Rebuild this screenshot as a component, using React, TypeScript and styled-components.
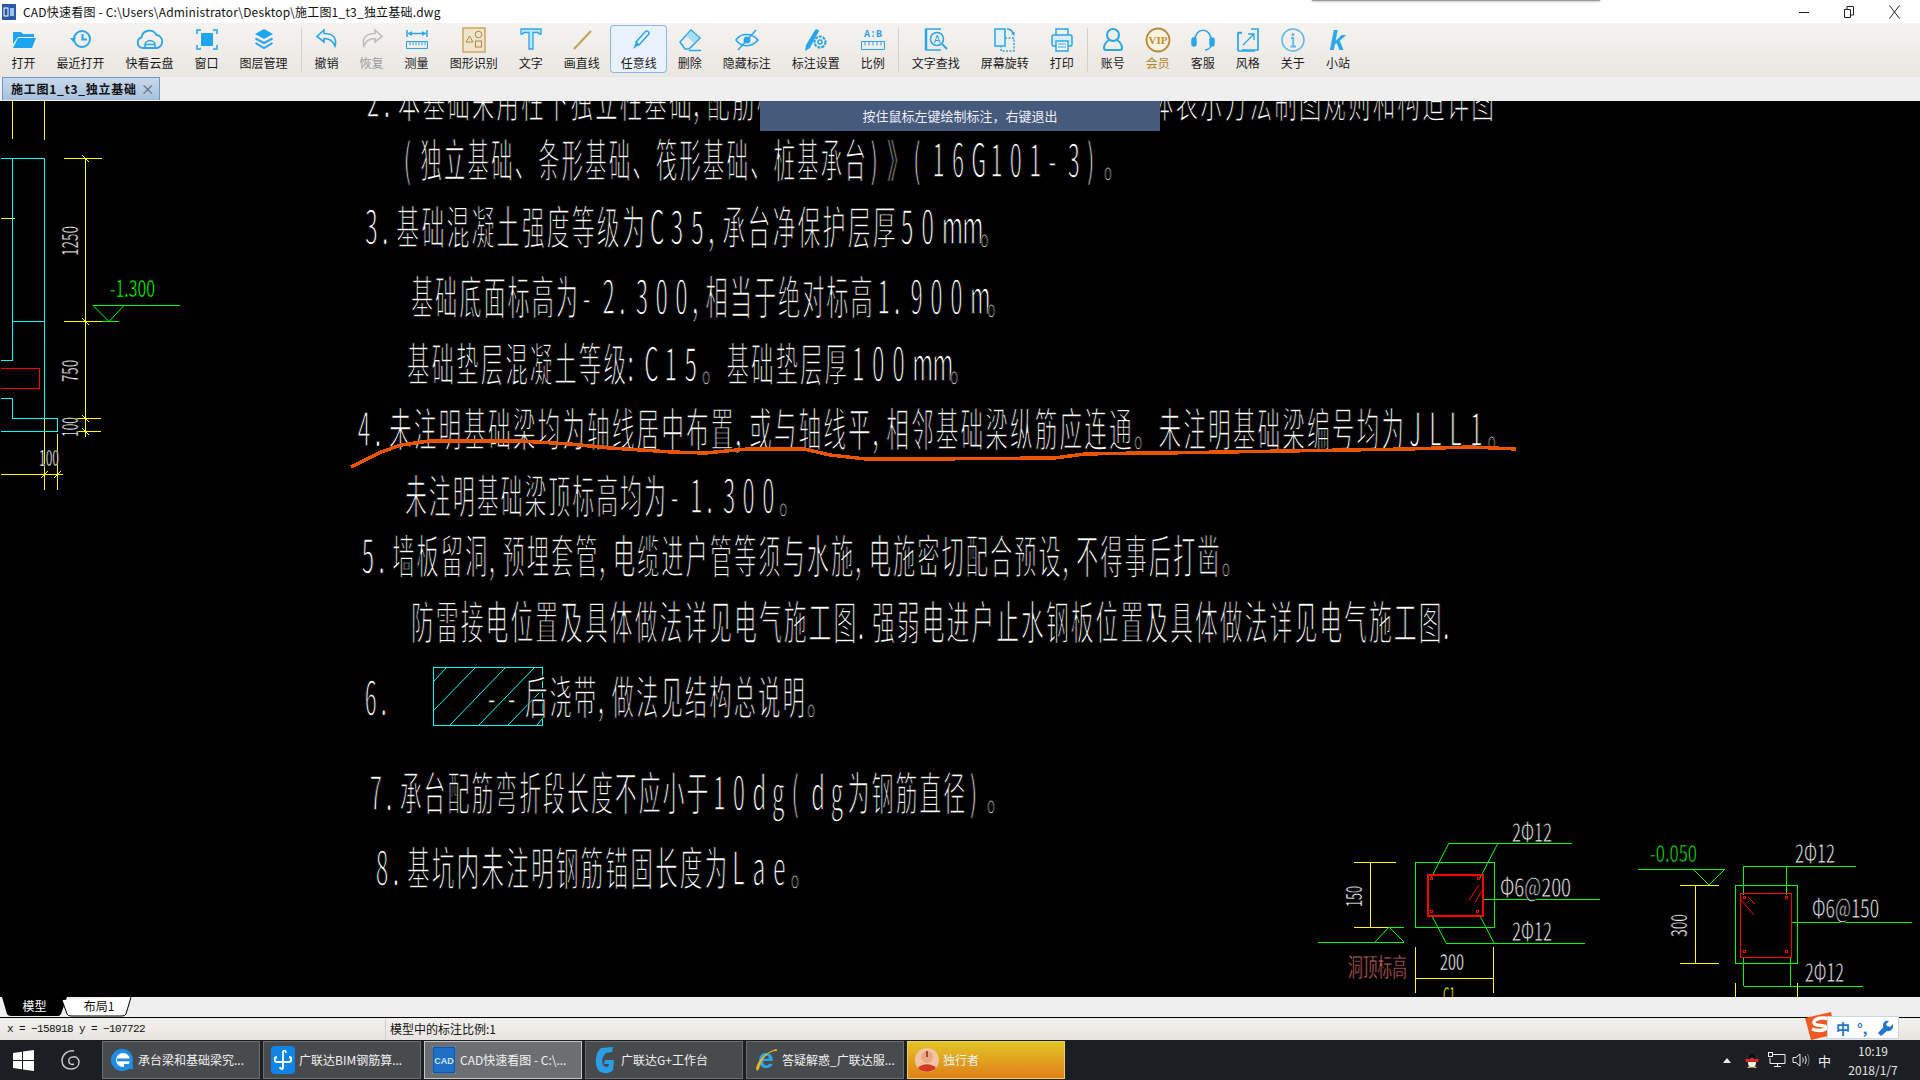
import React from "react"
import styled, { createGlobalStyle } from "styled-components"

import type { FC, ReactNode } from "react"

const CJK = `"Noto Sans CJK SC", "Liberation Sans", sans-serif`
const BLUE = "#29a6ea"

const GlobalStyle = createGlobalStyle`
  html, body {
    margin: 0;
    padding: 0;
    background: #000;
    font-family: ${CJK};
  }
`

const Page = styled.div`
  position: relative;
  width: 1920px;
  height: 1080px;
  display: flex;
  flex-direction: column;
  overflow: hidden;
`

const TitleBar = styled.div`
  height: 23px;
  background: #fff;
  display: flex;
  align-items: center;
  padding-left: 2px;
  flex-shrink: 0;
`

const TitleText = styled.span`
  font-size: 12px;
  letter-spacing: 0.2px;
  color: #111;
  margin-left: 7px;
  white-space: nowrap;
`

const WindowButtons = styled.div`
  margin-left: auto;
  display: flex;
  gap: 35px;
  padding-right: 20px;
  align-items: center;
  height: 100%;
`

const TopShadow = styled.div`
  position: absolute;
  left: 1312px;
  top: -4px;
  width: 288px;
  height: 5px;
  background: #999;
  box-shadow: 0 0 3px #999;
`

const Toolbar = styled.div`
  height: 54px;
  background: linear-gradient(#f5f3f0, #eae6e2);
  display: flex;
  align-items: stretch;
  padding-left: 1px;
  flex-shrink: 0;
`

const ToolItem = styled.div<{ $active?: boolean }>`
  padding: 0 10.5px;
  margin: ${(p) => (p.$active ? "2px 0 4px" : "0")};
  display: flex;
  flex-direction: column;
  align-items: center;
  box-sizing: border-box;
  border-radius: 4px;
  background: ${(p) => (p.$active ? "#eaf2fd" : "transparent")};
  box-shadow: ${(p) => (p.$active ? "inset 0 0 0 1px #8db5ee" : "none")};
`

const ToolIcon = styled.div<{ $active?: boolean }>`
  width: 0;
  height: 26px;
  margin-top: ${(p) => (p.$active ? "2px" : "4px")};
  display: flex;
  align-items: center;
  justify-content: center;

  svg {
    flex-shrink: 0;
  }
`

const ToolLabel = styled.span<{ $tone?: string }>`
  font-size: 12px;
  line-height: 16px;
  margin-top: 2px;
  white-space: nowrap;
  color: ${(p) => p.$tone || "#1a1a1a"};
`

const ToolSep = styled.div`
  width: 1px;
  margin: 5px 2.5px;
  background: #d3cfcb;
`

const TabStrip = styled.div`
  height: 24px;
  background: #efefef;
  padding: 0 0 1px 2px;
  box-sizing: border-box;
  flex-shrink: 0;
  display: flex;
`

const DocTab = styled.div`
  width: 158px;
  height: 23px;
  box-sizing: border-box;
  background: linear-gradient(#c9d9ec, #a8c1de);
  border: 1px solid #6f96c4;
  border-bottom: none;
  display: flex;
  align-items: center;
  padding: 0 0 2px 8px;
  gap: 4px;
  font-size: 12px;
  font-weight: 700;
  letter-spacing: 0.75px;
  color: #111;
  white-space: nowrap;
`

const TabClose = styled.span`
  font-weight: 400;
  font-size: 14px;
  color: #667;
`

const Canvas = styled.div`
  position: relative;
  flex: 1;
  background: #000;
  overflow: hidden;
`

const Drawing = styled.svg`
  display: block;
  width: 100%;
  height: 100%;
`

const CadLine = styled.path<{ $c: string; $w?: number }>`
  fill: none;
  stroke: ${(p) => p.$c};
  stroke-width: ${(p) => p.$w ?? 1};
  shape-rendering: crispEdges;
`

const CadSlant = styled.path<{ $c: string }>`
  fill: none;
  stroke: ${(p) => p.$c};
  stroke-width: 1;
`

const CadText = styled.text<{ $c?: string; $thin?: number }>`
  font-family: "Noto Sans CJK SC", sans-serif;
  fill: ${(p) => p.$c || "#fff"};
  stroke: #000;
  stroke-width: ${(p) => p.$thin ?? 1.5}px;
`

const Markup = styled.path`
  fill: none;
  stroke: #ea5504;
  stroke-width: 3.5;
  stroke-linejoin: round;
  shape-rendering: crispEdges;
`

const Banner = styled.div`
  position: absolute;
  left: 760px;
  top: 0;
  width: 400px;
  height: 30px;
  padding-bottom: 2px;
  box-sizing: border-box;
  background: #465a7c;
  color: #eef;
  font-size: 13px;
  display: flex;
  align-items: center;
  justify-content: center;
`

const LayoutTabs = styled.div`
  height: 20px;
  background: #efefef;
  border-bottom: 1px solid #000;
  display: flex;
  padding-left: 2px;
  flex-shrink: 0;
`

const SheetTab = styled.div<{ $on?: boolean }>`
  position: relative;
  width: ${(p) => (p.$on ? "65px" : "70px")};
  margin-left: ${(p) => (p.$on ? "0" : "-5px")};
  padding-left: ${(p) => (p.$on ? "0" : "4px")};
  box-sizing: border-box;
  height: 20px;
  display: flex;
  align-items: center;
  justify-content: center;
  font-size: 12px;
  color: ${(p) => (p.$on ? "#fff" : "#111")};

  span {
    position: relative;
    top: -1.5px;
  }
  svg {
    position: absolute;
    inset: 0;
  }
`

const StatusBar = styled.div`
  height: 22px;
  background: linear-gradient(#f3f1ee, #e8e4e0);
  display: flex;
  align-items: center;
  flex-shrink: 0;
  font-size: 12px;
  color: #111;
`

const Coords = styled.div`
  width: 378px;
  padding-left: 7px;
  font-family: "Liberation Mono", monospace;
  font-size: 11px;
  letter-spacing: -0.6px;
  height: 100%;
  display: flex;
  align-items: center;
  border-right: 1px solid #d3cfcb;
`

const ScaleNote = styled.div`
  padding-left: 4px;
  margin-top: -1px;
  white-space: nowrap;
`

const Taskbar = styled.div`
  height: 40px;
  background: #1b1f23;
  display: flex;
  align-items: center;
  flex-shrink: 0;
`

const SystemSlot = styled.div`
  width: 47px;
  display: flex;
  justify-content: center;
  align-items: center;
  height: 100%;
`

const TaskButtons = styled.div`
  display: flex;
  gap: 3px;
  margin-left: 8px;
`

const TaskButton = styled.div<{ $state?: "active" | "flash" }>`
  width: 158px;
  height: 38px;
  box-sizing: border-box;
  display: flex;
  align-items: center;
  gap: 4px;
  padding: 0 0 1px 7px;
  font-size: 12px;
  color: #f1f1f1;
  white-space: nowrap;
  overflow: hidden;
  background: ${(p) =>
    p.$state === "flash"
      ? "linear-gradient(#e2c526, #df7f18)"
      : p.$state === "active"
        ? "#6c6f72"
        : "#484b4e"};
  border: 1px solid
    ${(p) =>
      p.$state === "flash"
        ? "#ecd25a"
        : p.$state === "active"
          ? "#c4c6c8"
          : "#6b6e71"};
`

const Tray = styled.div`
  margin-left: auto;
  display: flex;
  align-items: center;
  height: 100%;
`

const TraySlot = styled.div<{ $w: number }>`
  width: ${(p) => p.$w}px;
  display: flex;
  justify-content: center;
  align-items: center;
  color: #f0f0f0;
  font-size: 13px;
`

const Clock = styled.div`
  width: 74px;
  margin-right: 10px;
  text-align: center;
  color: #e6e6e6;
  font-size: 12px;
  line-height: 19px;
`

const ImeBar = styled.div`
  position: absolute;
  left: 1827px;
  top: 1016px;
  width: 72px;
  height: 23px;
  box-sizing: border-box;
  background: #fff;
  border: 1px solid #c6d6e6;
  display: flex;
  align-items: center;
  padding-left: 8px;
  gap: 7px;
  color: #1d76c8;
  font-size: 14px;
  font-weight: 700;
`

const ImeLogo = styled.svg`
  position: absolute;
  left: 1803px;
  top: 1012px;
`

const Ln: FC<{ c: string; d: string; w?: number }> = ({ c, d, w }) => <CadLine $c={c} $w={w} d={d} />

const Y = "#ffff00"
const C = "#00ffff"
const R = "#ff0000"
const G = "#00ff00"
const G2 = "#1bd91b"
const NOTE_SIZE = 46

interface NoteLine {
  x: number
  y: number
  w: number
  t: string
}

const notes: NoteLine[] = [
  { x: 363, y: 116.5, w: 1131, t: "2.本基础采用柱下独立柱基础,配筋构造详见《混凝土结构施工图平面整体表示方法制图规则和构造详图" },
  { x: 400, y: 176.5, w: 727, t: "(独立基础、条形基础、筏形基础、桩基承台)》(16G101-3)。" },
  { x: 361, y: 243.5, w: 643, t: "3.基础混凝土强度等级为C35,承台净保护层厚50mm。" },
  { x: 410, y: 313.5, w: 600, t: "基础底面标高为-2.300,相当于绝对标高1.900m。" },
  { x: 406, y: 381, w: 567, t: "基础垫层混凝土等级:C15。基础垫层厚100mm。" },
  { x: 354, y: 445.5, w: 1158, t: "4.未注明基础梁均为轴线居中布置,或与轴线平,相邻基础梁纵筋应连通。未注明基础梁编号均为JLL1。" },
  { x: 404, y: 512.5, w: 398, t: "未注明基础梁顶标高均为-1.300。" },
  { x: 358, y: 572.5, w: 887, t: "5.墙板留洞,预埋套管,电缆进户管等须与水施,电施密切配合预设,不得事后打凿。" },
  { x: 410, y: 639, w: 1047, t: "防雷接电位置及具体做法详见电气施工图.强弱电进户止水钢板位置及具体做法详见电气施工图." },
  { x: 361, y: 715, w: 32, t: "6." },
  { x: 484, y: 714, w: 346, t: "--后浇带,做法见结构总说明。" },
  { x: 366, y: 810, w: 644, t: "7.承台配筋弯折段长度不应小于10dg(dg为钢筋直径)。" },
  { x: 372, y: 884.5, w: 442, t: "8.基坑内未注明钢筋锚固长度为Lae。" },
]

// the drawing's font sets every character in its own cell, so place them one by one
const weightOf = (ch: string) => {
  if (/[.,:]/.test(ch)) return 0.55
  if (/[\x20-\x7e]/.test(ch)) return 0.82
  return 1
}

const NoteText: FC<{ note: NoteLine }> = ({ note }) => {
  const chars = Array.from(note.t)
  const total = chars.reduce((sum, ch) => sum + weightOf(ch), 0)
  const cell = note.w / total
  const sx = Math.min((cell * 0.92) / NOTE_SIZE, 0.5)
  let at = 0
  const xs = chars.map((ch) => {
    const slot = weightOf(ch) * cell
    const glyph = (/[\x20-\x7e]/.test(ch) ? 0.55 : 1) * NOTE_SIZE * sx
    const pos = at + Math.max(0, (slot - glyph) / 2)
    at += slot
    return (pos / sx).toFixed(1)
  })
  return (
    <CadText transform={`translate(${note.x} ${note.y}) scale(${sx.toFixed(3)} 1)`} x={xs.join(" ")} y={0} fontSize={NOTE_SIZE}>
      {note.t}
    </CadText>
  )
}

const Small: FC<{ x: number; y: number; w: number; s?: number; c?: string; rot?: boolean; children: ReactNode }> = ({
  x,
  y,
  w,
  s = 22,
  c,
  rot,
  children,
}) => (
  <CadText
    $c={c}
    $thin={s > 24 ? 0.8 : 0.5}
    x={x}
    y={y}
    fontSize={s}
    textLength={w}
    lengthAdjust="spacingAndGlyphs"
    transform={rot ? `rotate(-90 ${x} ${y})` : undefined}
  >
    {children}
  </CadText>
)

const CadDrawing: FC = () => (
  <Drawing viewBox="0 101 1920 896">
    {/* left detail */}
    <Ln c={Y} d="M12.5 100V139M44.5 100V140M1 218.5H15M85.5 158V437M64 158.5H102M64 321.5H102M64 418.5H101M77 431.5H101M44.5 418V490M57.5 434V490M1 474.5H63" />
    <Ln c={C} d="M1 158.5H44.5V418M12.5 158.5V360.5H1M12.5 321.5H44.5M1 398.5H12.5V418.5H57.5V431.5H1" />
    <Ln c={R} d="M1 368.5H39.5V388.5H1" />
    <Ln c={G} d="M93 305.5H180M102 321.5H119" />
    <CadSlant $c={G} d="M93 305.5L109 321.5L124 305.5" />
    <CadSlant $c={Y} d="M82 155L89 162M82 318L89 325M82 415L89 422M82 428L89 435M41 478L48 471M54 478L61 471" />
    <Small x={78} y={256} w={30} rot>1250</Small>
    <Small x={78} y={382} w={22} rot>750</Small>
    <Small x={78} y={437} w={20} rot>100</Small>
    <Small x={39} y={466} w={20}>100</Small>
    <Small x={110} y={297} w={45} s={23} c={G}>-1.300</Small>

    {/* notes */}
    <path d="M433.5 667.5H542.5V725.5H433.5Z" fill="none" stroke={C} shapeRendering="crispEdges" />
    <CadSlant $c={C} d="M434 681L447 667M434 710L476 667M450 725L506 667M479 725L535 667M508 725L542 690M537 725L542 719" />
    {notes.map((n) => (
      <NoteText key={n.t} note={n} />
    ))}
    <Markup d="M351 467L381 452L401 445L429 441L519 441L570 444L610 448L672 452L705 453L748 449L804 449L830 455L866 459L922 459L1054 458L1085 454L1140 453L1163 453L1286 451L1408 449L1470 447L1516 449" />

    {/* section C1 */}
    <Ln c={G} d="M1415.5 862.5H1494V927.5H1415.5ZM1449 843.5H1572M1446 943.5H1585M1483 899.5H1600" />
    <CadSlant $c={G} d="M1449 843L1431 878M1498 843L1480 878M1432 916L1446 943M1480 916L1494 943" />
    <Ln c={R} w={2} d="M1428 875H1483V916H1428Z" />
    <CadSlant $c={R} d="M1469 900L1479 885M1475 903L1482 890" />
    <Ln c={R} d="M1430.5 877.5h2v2h-2zM1477.5 877.5h2v2h-2zM1430.500 910.500h2v2h-2zM1476.500 910.500h2v2h-2z" />
    <Ln c={Y} d="M1354 862.5H1396M1354 927.5H1390M1370.5 862V927M1415.5 947V993M1493.5 947V993M1415 978.5H1494" />
    <Ln c={G} d="M1390 927.5H1404M1318 942.5H1404" />
    <CadSlant $c={G} d="M1375 942L1389 927L1404 942" />
    <Small x={1512} y={842} w={40} s={27}>2Φ12</Small>
    <Small x={1500} y={897} w={71} s={27}>Φ6@200</Small>
    <Small x={1512} y={941} w={40} s={27}>2Φ12</Small>
    <Small x={1362} y={907} w={21} rot>150</Small>
    <Small x={1348} y={977} w={59} s={26} c="#ff8080">洞顶标高</Small>
    <Small x={1440} y={970} w={24}>200</Small>
    <Small x={1443} y={1003} w={12} c={Y}>C1</Small>

    {/* section right */}
    <Ln c={G} d="M1638 869.5H1725M1735.5 885.5H1797.5V963.5H1735.5ZM1743.5 866.5H1856M1743.5 866V895M1786.5 866V895M1791 922.5H1912M1743.5 986.5H1863M1743.5 957V986M1790.5 957V986" />
    <CadSlant $c={G} d="M1693 869L1709 885L1725 869" />
    <Ln c={R} d="M1740.5 893.5H1791.5V957.5H1740.5Z" />
    <CadSlant $c={R} d="M1741 900L1754 915M1748 897L1755 904" />
    <Ln c={R} d="M1743.500 896.500h2v2h-2zM1785.500 896.500h2v2h-2zM1743.500 950.500h2v2h-2zM1785.500 950.500h2v2h-2z" />
    <Ln c={Y} d="M1680 885.5H1719M1680 963.5H1719M1695.5 885V963M1735.5 983V997M1797.5 983V997" />
    <Small x={1650} y={862} w={47} s={23} c={G2}>-0.050</Small>
    <Small x={1795} y={863} w={40} s={27}>2Φ12</Small>
    <Small x={1812} y={918} w={67} s={27}>Φ6@150</Small>
    <Small x={1805} y={982} w={39} s={27}>2Φ12</Small>
    <Small x={1687} y={937} w={23} rot>300</Small>
  </Drawing>
)

/* toolbar icons */
const Ico: FC<{ w?: number; children: ReactNode }> = ({ w = 26, children }) => (
  <svg width={w} height={26} viewBox={`0 0 ${w} 26`} fill="none" stroke={BLUE} strokeWidth={1.5}>
    {children}
  </svg>
)

const icons: Record<string, ReactNode> = {
  open: (
    <Ico>
      <path fill="#1ea5f0" stroke="none" d="M2 5h8l2 2h11v3H7L2 17zM7 11h18l-4 10H2z" />
    </Ico>
  ),
  recent: (
    <Ico>
      <circle cx="14" cy="12" r="8" strokeWidth={2} />
      <path d="M14.5 7v5.5H19" strokeWidth={2} />
      <path fill={BLUE} stroke="none" d="M2 11h6l-3 4z" />
    </Ico>
  ),
  cloud: (
    <Ico w={30}>
      <path strokeWidth={1.8} d="M8 21a5.5 5.5 0 0 1-1.5-10.7A8 8 0 0 1 21.5 8 6.6 6.6 0 0 1 22 21z" />
      <path d="M10 21v-3a5 4.5 0 0 1 10 0v3M10.5 17.5h9" />
    </Ico>
  ),
  window: (
    <Ico>
      <rect x="7" y="6" width="12" height="13" rx="1" fill="#1ea5f0" stroke="none" />
      <path strokeWidth={2} stroke="#4cb8ee" d="M3 7V3h4M19 3h4v4M3 18v4h4M19 22h4v-4" />
    </Ico>
  ),
  layers: (
    <Ico>
      <path fill="#1ea5f0" stroke="none" d="M13 2l9 5-9 5-9-5z" />
      <path strokeWidth={2} d="M4.5 11.5l8.5 4.5 8.5-4.5M4.5 16l8.5 5 8.5-5" />
    </Ico>
  ),
  undo: (
    <Ico>
      <path d="M10 3L3 9.5 10 15v-3.5c6 0 9 2 11 7.5 2-7-1-12.500-11-12.500z" strokeWidth={1.6} />
    </Ico>
  ),
  redo: (
    <Ico>
      <path stroke="#bdbdbd" d="M16 3l7 6.500L16 15v-3.500c-6 0-9 2-11 7.500-2-7 1-12.500 11-12.500z" strokeWidth={1.6} />
    </Ico>
  ),
  measure: (
    <Ico w={24}>
      <path d="M2 3v7M22 3v7M3 6.500h18" />
      <path fill={BLUE} stroke="none" d="M3 6.500l4-2.500v5zM21 6.500l-4-2.500v5z" />
      <path d="M1.500 14.500h21v7h-21zM5 15v3M8 15v3M11 15v3M14 15v3M17 15v3M20 15v3" strokeWidth={1} />
    </Ico>
  ),
  shape: (
    <Ico w={24}>
      <rect x="1" y="1" width="22" height="24" fill="#f1e4c8" stroke="#c9a25a" strokeWidth={1.4} />
      <path stroke="#a98a4a" strokeWidth={1} d="M4 15l3.500-6 3.500 6z" />
      <circle cx="16.500" cy="7.500" r="3.300" stroke="#a98a4a" strokeWidth={1} />
      <rect x="13.500" y="14" width="6" height="6" stroke="#a98a4a" strokeWidth={1} />
    </Ico>
  ),
  text: (
    <Ico>
      <path fill="#bfe6fb" strokeWidth={1.3} d="M3 2h20v5h-1.500l-1.500-1.500h-5V22h-4V5.500H6L4.500 7H3z" />
    </Ico>
  ),
  line: (
    <Ico>
      <path stroke="#c2a255" strokeWidth={2} d="M5 22L22 4" />
    </Ico>
  ),
  pen: (
    <Ico>
      <path d="M10 15L19 5a2 2 0 0 1 3.500 2.500L13 18z" />
      <path fill={BLUE} stroke="none" d="M10 15l3 3-3 2-3 2z" />
    </Ico>
  ),
  eraser: (
    <Ico>
      <path d="M3 15L14 3l9 8-11 11H8z" />
      <path fill="#a7dcf6" stroke="none" d="M9 9l5-5 8 7-5 5z" />
      <path d="M12 23.500h12" />
    </Ico>
  ),
  hide: (
    <Ico>
      <path d="M2 13c5-7.500 16-7.500 22 0-6 7.500-17 7.500-22 0z" />
      <circle cx="13" cy="13" r="3.500" fill={BLUE} stroke="none" />
      <path d="M4 23L22 3" />
    </Ico>
  ),
  setup: (
    <Ico w={28}>
      <path fill={BLUE} stroke="none" d="M3 24l1-6L13 3c1.500-1.500 4-.5 4 1.500L13 11l-2 4-3 6z" />
      <circle cx="18" cy="15" r="5.500" strokeWidth={2.2} strokeDasharray="3 1" />
      <circle cx="18" cy="15" r="2" />
    </Ico>
  ),
  ratio: (
    <Ico w={26}>
      <text x="13" y="9.500" textAnchor="middle" fontFamily="Liberation Mono" fontWeight="700" fontSize="10" fill={BLUE} stroke="none">A:B</text>
      <path d="M1.500 14.500h23v8h-23zM5 15v3.500M9 15v3.500M13 15v3.500M17 15v3.500M21 15v3.500" strokeWidth={1} />
    </Ico>
  ),
  find: (
    <Ico>
      <path strokeWidth={1.500} d="M18 2H3v21h15" />
      <path d="M3 2v21" strokeWidth={2.500} />
      <circle cx="14" cy="12" r="6.500" />
      <path d="M19 17l5 5" strokeWidth={2} />
      <text x="14" y="15.500" textAnchor="middle" fontFamily="Liberation Sans" fontSize="10" fill={BLUE} stroke="none">A</text>
    </Ico>
  ),
  rotate: (
    <Ico>
      <rect x="3" y="2" width="10" height="17" fill="#e4f2fb" />
      <path strokeDasharray="2 1.500" d="M13 11h9v13H9v-5" />
      <path d="M15 2c3 0 5 1.500 6 4" />
      <path fill={BLUE} stroke="none" d="M19 6l4-1-1 4z" />
    </Ico>
  ),
  print: (
    <Ico w={24}>
      <path d="M6 8V2h12v6" />
      <rect x="2" y="8" width="20" height="11" rx="1.500" fill="#d8eefa" />
      <rect x="6" y="14" width="12" height="10" fill="#f4f9fc" />
      <path d="M8 17h8M8 20h8" strokeWidth={1} />
    </Ico>
  ),
  user: (
    <Ico w={24}>
      <circle cx="12" cy="8" r="6" strokeWidth={2} />
      <path strokeWidth={2} d="M8 13c-3 2-5 5-5 8 0 1 1 2 2 2h14c1 0 2-1 2-2 0-3-2-6-5-8" />
    </Ico>
  ),
  vip: (
    <Ico w={26}>
      <circle cx="13" cy="13" r="11.500" stroke="#b98a3c" strokeWidth={1.800} fill="#f9f3e4" />
      <text x="13" y="17" textAnchor="middle" fontFamily="Liberation Serif" fontWeight="700" fontSize="11" fill="#c28f2c" stroke="none">VIP</text>
    </Ico>
  ),
  service: (
    <Ico w={26}>
      <path strokeWidth={1.600} d="M5 13c0-13 16-13 16 0M21 17c0 4-3 6-6 6" />
      <rect x="2" y="11" width="4" height="8" rx="2" fill={BLUE} />
      <rect x="20" y="11" width="4" height="8" rx="2" fill={BLUE} />
    </Ico>
  ),
  style: (
    <Ico w={24}>
      <path strokeWidth={1.700} d="M15 2h7v21H7v-1M6 6H2v18" />
      <path strokeWidth={1.700} d="M2 5.500h4M2 24h17" />
      <path strokeWidth={1.300} d="M7 18L18 7M12 7h6v6" />
    </Ico>
  ),
  about: (
    <Ico w={26}>
      <circle cx="13" cy="13" r="11" stroke="#5cb8e6" />
      <circle cx="13" cy="7.500" r="1.500" fill="#5cb8e6" stroke="none" />
      <path stroke="#5cb8e6" strokeWidth={1.800} d="M11 11h2.200v8M10.500 19.500h5.500" />
    </Ico>
  ),
  site: (
    <Ico w={26}>
      <text x="12" y="23" textAnchor="middle" fontFamily="Liberation Sans" fontStyle="italic" fontWeight="700" fontSize="28" fill="#2aa9e8" stroke="none">k</text>
    </Ico>
  ),
}

interface Tool {
  key: string
  label: string
  tone?: string
  active?: boolean
}

const toolGroups: Tool[][] = [
  [
    { key: "open", label: "打开" },
    { key: "recent", label: "最近打开" },
    { key: "cloud", label: "快看云盘" },
    { key: "window", label: "窗口" },
    { key: "layers", label: "图层管理" },
  ],
  [
    { key: "undo", label: "撤销" },
    { key: "redo", label: "恢复", tone: "#999" },
    { key: "measure", label: "测量" },
    { key: "shape", label: "图形识别" },
    { key: "text", label: "文字" },
    { key: "line", label: "画直线" },
    { key: "pen", label: "任意线", active: true },
    { key: "eraser", label: "删除" },
    { key: "hide", label: "隐藏标注" },
    { key: "setup", label: "标注设置" },
    { key: "ratio", label: "比例" },
  ],
  [
    { key: "find", label: "文字查找" },
    { key: "rotate", label: "屏幕旋转" },
    { key: "print", label: "打印" },
  ],
  [
    { key: "user", label: "账号" },
    { key: "vip", label: "会员", tone: "#b8862b" },
    { key: "service", label: "客服" },
    { key: "style", label: "风格" },
    { key: "about", label: "关于" },
    { key: "site", label: "小站" },
  ],
]

const AppGlyph: FC = () => (
  <svg width="14" height="16" viewBox="0 0 14 16">
    <rect width="14" height="16" fill="#2a5aa8" />
    <rect x="2" y="4" width="4" height="8" fill="none" stroke="#fff" />
    <rect x="8" y="4" width="4" height="8" fill="#9cc4ee" />
  </svg>
)

const WinLogo: FC = () => (
  <svg width="21" height="21" viewBox="0 0 21 21" fill="#fff">
    <path d="M0 3l9-1.300V10H0zM10 1.500L21 0v10H10zM0 11h9v8.300L0 18zM10 11h11v10L10 19.500z" />
  </svg>
)

const Swirl: FC = () => (
  <svg width="22" height="22" viewBox="0 0 22 22" fill="none" stroke="#c4c6c8" strokeWidth="1.500">
    <path d="M14 2C7 1 2 6 2 12c0 5 4 8 9 8 5 0 8-3 8-7 0-3-3-6-6-5-3 0-5 2-4 5 0 2 3 3 5 2" />
  </svg>
)

const IeRound: FC = () => (
  <svg width="24" height="26" viewBox="0 0 24 26">
    <circle cx="12" cy="13" r="11" fill="#1e8de6" />
    <circle cx="13" cy="13" r="7" fill="#fff" />
    <rect x="7" y="11.500" width="14" height="2.800" fill="#1e8de6" />
    <path d="M14 17h9v5H14z" fill="#1e8de6" />
  </svg>
)

const BimGlyph: FC = () => (
  <svg width="24" height="30" viewBox="0 0 24 30">
    <rect y="1" width="24" height="28" rx="4" fill="#0f86e6" />
    <path d="M12 6v18M12 24c-2 0-3-1-3-2M6 12c-3 0-3 5 0 5h12c3 0 3-5 0-5M12 6c2-1 3 0 3 2" stroke="#fff" strokeWidth="1.800" fill="none" />
  </svg>
)

const CadGlyph: FC = () => (
  <svg width="24" height="28" viewBox="0 0 24 28">
    <rect width="24" height="28" rx="2" fill="#17539e" stroke="#8f9aa6" />
    <rect x="2" y="2" width="20" height="24" fill="#1f6fc4" />
    <text x="12" y="18" textAnchor="middle" fontFamily="Liberation Sans" fontSize="9" fontWeight="700" fill="#cfe3f7">CAD</text>
  </svg>
)

const GGlyph: FC = () => (
  <svg width="24" height="30" viewBox="0 0 24 30">
    <path d="M20 2L8 3C2 8 1 20 6 26c4 3 11 3 14-1l1-10H12l-1 4h5c0 3-3 4-5 2-3-3-2-10 2-13l6-1z" fill="#2a9fe6" />
  </svg>
)

const IeColor: FC = () => (
  <svg width="24" height="28" viewBox="0 0 24 28">
    <text x="12" y="22" textAnchor="middle" fontFamily="Liberation Sans" fontWeight="700" fontSize="28" fill="#28a6e6">e</text>
    <path d="M3 25C0 22 6 8 22 3c1 0 1 1 1 2-8-1-16 8-18 18" fill="#e8b820" />
  </svg>
)

const Avatar: FC = () => (
  <svg width="24" height="24" viewBox="0 0 24 24">
    <circle cx="12" cy="12" r="12" fill="#f0c4a4" />
    <circle cx="12" cy="9" r="6" fill="#e8a882" />
    <path d="M3 20c4-5 14-5 18 0-5 5-13 5-18 0z" fill="#d33a20" />
    <path d="M12 3v6" stroke="#b04030" strokeWidth="2" />
  </svg>
)

const Penguin: FC = () => (
  <svg width="16" height="18" viewBox="0 0 16 18">
    <ellipse cx="8" cy="8" rx="5" ry="7" fill="#111" stroke="#333" />
    <ellipse cx="8" cy="12" rx="4" ry="4.500" fill="#f4f4f4" />
    <path d="M1 8h14l-1 3H2z" fill="#e2231a" />
    <path d="M3 17h4l-2-2zM9 17h4l-2-2z" fill="#f0b020" />
  </svg>
)

const TrayNet: FC = () => (
  <svg width="18" height="16" viewBox="0 0 18 16" fill="none" stroke="#f0f0f0">
    <path d="M5 2.500h12v9H2V6M9.500 11.500V14M6 14.500h7" />
    <rect x="0.500" y="0.500" width="4" height="4" />
  </svg>
)

const TrayVolume: FC = () => (
  <svg width="18" height="16" viewBox="0 0 18 16" fill="none" stroke="#f0f0f0">
    <path d="M1 5.500h3L8 2v12l-4-3.500H1z" />
    <path d="M10.500 5.500c1 1.500 1 3.500 0 5M13 4c1.500 2.500 1.500 5.500 0 8" />
    <path stroke="#777" d="M15.500 2c2 3.500 2 8.500 0 12" />
  </svg>
)

const App: FC = () => (
  <>
    <GlobalStyle />
    <Page>
      <TitleBar>
        <AppGlyph />
        <TitleText>CAD快速看图 - C:\Users\Administrator\Desktop\施工图1_t3_独立基础.dwg</TitleText>
        <WindowButtons>
          <svg width="10" height="10" viewBox="0 0 10 10" stroke="#222" fill="none">
            <path d="M0 5.500h10" />
          </svg>
          <svg width="10" height="12" viewBox="0 0 10 12" stroke="#222" fill="none">
            <path d="M0.500 3.500h6v8h-6zM3 3V0.500h6.500V9H7" />
          </svg>
          <svg width="11" height="14" viewBox="0 0 11 14" stroke="#222" fill="none">
            <path d="M0.500 0.500l10 13M10.500 0.500l-10 13" />
          </svg>
        </WindowButtons>
      </TitleBar>
      <TopShadow />
      <Toolbar>
        {toolGroups.map((group, i) => (
          <React.Fragment key={i}>
            {i > 0 && <ToolSep />}
            {group.map((tool) => (
              <ToolItem key={tool.key} $active={tool.active}>
                <ToolIcon $active={tool.active}>{icons[tool.key]}</ToolIcon>
                <ToolLabel $tone={tool.tone}>{tool.label}</ToolLabel>
              </ToolItem>
            ))}
          </React.Fragment>
        ))}
      </Toolbar>
      <TabStrip>
        <DocTab>
          施工图1_t3_独立基础
          <TabClose>×</TabClose>
        </DocTab>
      </TabStrip>
      <Canvas>
        <CadDrawing />
        <Banner>按住鼠标左键绘制标注，右键退出</Banner>
      </Canvas>
      <LayoutTabs>
        <SheetTab $on>
          <svg width="65" height="20" viewBox="0 0 65 20">
            <path d="M0 0L5 17Q6 19 9 19H56Q58 19 59 17L65 0z" fill="#000" />
          </svg>
          <span>模型</span>
        </SheetTab>
        <SheetTab>
          <svg width="70" height="20" viewBox="0 0 70 20">
            <path d="M0 3L5 17Q6 19 9 19H60Q63 19 64 17L69 0" fill="#fff" stroke="#000" />
          </svg>
          <span>布局1</span>
        </SheetTab>
      </LayoutTabs>
      <StatusBar>
        <Coords>x = −158918 y = −107722</Coords>
        <ScaleNote>模型中的标注比例:1</ScaleNote>
      </StatusBar>
      <Taskbar>
        <SystemSlot>
          <WinLogo />
        </SystemSlot>
        <SystemSlot>
          <Swirl />
        </SystemSlot>
        <TaskButtons>
          <TaskButton>
            <IeRound />
            承台梁和基础梁究...
          </TaskButton>
          <TaskButton>
            <BimGlyph />
            广联达BIM钢筋算...
          </TaskButton>
          <TaskButton $state="active">
            <CadGlyph />
            CAD快速看图 - C:\...
          </TaskButton>
          <TaskButton>
            <GGlyph />
            广联达G+工作台
          </TaskButton>
          <TaskButton>
            <IeColor />
            答疑解惑_广联达服...
          </TaskButton>
          <TaskButton $state="flash">
            <Avatar />
            独行者
          </TaskButton>
        </TaskButtons>
        <Tray>
          <TraySlot $w={24}>
            <svg width="8" height="5" viewBox="0 0 8 5" fill="#eee">
              <path d="M0 5l4-5 4 5z" />
            </svg>
          </TraySlot>
          <TraySlot $w={25}>
            <Penguin />
          </TraySlot>
          <TraySlot $w={25}>
            <TrayNet />
          </TraySlot>
          <TraySlot $w={24}>
            <TrayVolume />
          </TraySlot>
          <TraySlot $w={23}>中</TraySlot>
          <Clock>
            10:19
            <br />
            2018/1/7
          </Clock>
        </Tray>
      </Taskbar>
      <ImeLogo width="34" height="28" viewBox="0 0 34 28">
        <path d="M2 6L28 0l5 22-25 6z" fill="#f05a22" />
        <path d="M26 7c-6-2-14-1-15 3-1 5 13 2 12 6-1 3-9 3-14 1" fill="none" stroke="#fff" strokeWidth="3.500" />
      </ImeLogo>
      <ImeBar>
        <span>中</span>
        <span>°,</span>
        <svg width="16" height="16" viewBox="0 0 16 16" fill="#1d76c8" style={{ marginLeft: 4 }}>
          <path d="M15 4l-3 3-3-1-1-2 3-3c-3-1-6 1-6 4 0 1 0 1 .5 2L0 13l3 3 6-5c3 1 7-2 6-7z" />
        </svg>
      </ImeBar>
    </Page>
  </>
)

export default App
